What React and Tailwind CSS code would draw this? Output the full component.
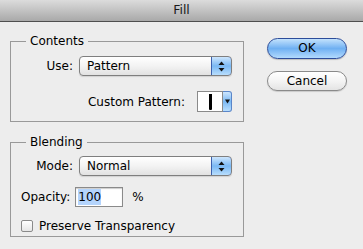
import React from 'react';

function Arrows() {
    return (
        <svg width="7" height="11" viewBox="0 0 7 11">
            <path d="M3.5 0.5 L6.5 4 L0.5 4 Z" fill="#111" />
            <path d="M3.5 10.5 L6.5 7 L0.5 7 Z" fill="#111" />
        </svg>
    );
}

function Select({ value }) {
    return (
        <div className="flex h-[20px] w-[153px] overflow-hidden rounded-[4px] border border-[#7f7f7f] bg-linear-to-b from-white via-[#f3f3f3] to-[#e2e2e2] shadow-[0_1px_1px_rgba(0,0,0,0.12)]">
            <div className="flex-1 pl-[7px] text-left leading-[18px]">{value}</div>
            <div className="-my-px -mr-px flex w-[21px] items-center justify-center rounded-r-[4px] border border-[#3d61ad] bg-linear-to-b from-[#cde6fd] via-[#7ab8f3] to-[#b8defd]">
                <Arrows />
            </div>
        </div>
    );
}

function Legend({ children }) {
    return <legend className="ml-[15px] px-[4px] leading-[16px]">{children}</legend>;
}

export default function App() {
    return (
        <div className="h-[249px] w-[363px] overflow-hidden bg-[#ededed] font-['DejaVu_Sans',sans-serif] text-[12px] text-black">
            <div className="flex h-[22px] items-center justify-center border-b border-[#4f4f4f] bg-linear-to-b from-[#dcdcdc] to-[#a9a9a9] text-[12.5px] text-[#1a1a1a]">
                Fill
            </div>
            <div className="flex">
                <div className="ml-[10px] w-[234px]">
                    <fieldset className="mt-[11px] h-[89px] border border-[#999]">
                        <Legend>Contents</Legend>
                        <div className="flex flex-col items-end pr-[11px] pt-[7px]">
                            <div className="flex items-center gap-[6px]">
                                <span>Use:</span>
                                <Select value="Pattern" />
                            </div>
                            <div className="mt-[15px] flex items-center gap-[12px]">
                                <span>Custom Pattern:</span>
                                <div className="flex h-[21px]">
                                    <div className="flex w-[26px] items-center justify-center border border-[#8a8a8a] bg-white">
                                        <div className="h-[16px] w-[3px] rounded-b-[1px] bg-black" />
                                    </div>
                                    <div className="flex w-[9px] items-center justify-center rounded-r-[3px] border border-l-0 border-[#5a86c9] bg-linear-to-b from-[#cde6fd] via-[#7ab8f3] to-[#b8defd]">
                                        <svg width="5" height="5" viewBox="0 0 5 5">
                                            <path d="M0 0.5 L5 0.5 L2.5 4.5 Z" fill="#111" />
                                        </svg>
                                    </div>
                                </div>
                            </div>
                        </div>
                    </fieldset>
                    <fieldset className="mt-[12px] h-[103px] border border-[#999]">
                        <Legend>Blending</Legend>
                        <div className="pt-[6px]">
                            <div className="flex items-center justify-end gap-[6px] pr-[11px]">
                                <span>Mode:</span>
                                <Select value="Normal" />
                            </div>
                            <div className="mt-[11px] flex items-center pl-[10px]">
                                <span>Opacity:</span>
                                <div className="ml-[5px] flex h-[20px] w-[48px] items-center border border-[#8a8a8a] bg-white pl-[2px] shadow-[inset_0_1px_1px_rgba(0,0,0,0.2)]">
                                    <span className="bg-[#b4d4fc] leading-[16px]">100</span>
                                </div>
                                <span className="ml-[9px]">%</span>
                            </div>
                            <div className="mt-[10px] flex items-center pl-[10px]">
                                <div className="h-[12px] w-[12px] rounded-[2px] border border-[#8a8a8a] bg-linear-to-b from-white to-[#e6e6e6]" />
                                <span className="ml-[6px]">Preserve Transparency</span>
                            </div>
                        </div>
                    </fieldset>
                </div>
                <div className="ml-[23px] mt-[16px] flex flex-col gap-[12px]">
                    <button className="h-[21px] w-[80px] rounded-full border border-[#2d4d9a] bg-linear-to-b from-[#c3e2fc] via-[#6fb0f2] to-[#b2dafd] leading-[19px] shadow-[0_1px_1px_rgba(0,0,0,0.2)]">
                        OK
                    </button>
                    <button className="h-[20px] w-[80px] rounded-full border border-[#8a8a8a] bg-linear-to-b from-white via-[#f4f4f4] to-[#e4e4e4] leading-[18px] shadow-[0_1px_1px_rgba(0,0,0,0.15)]">
                        Cancel
                    </button>
                </div>
            </div>
        </div>
    );
}
